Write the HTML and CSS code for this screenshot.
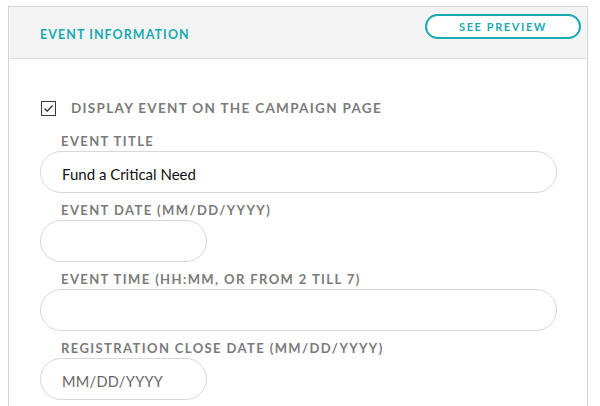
FILE: index.html
```html
<!DOCTYPE html>
<html>
<head>
<meta charset="utf-8">
<link rel="stylesheet" href="styles.css">
</head>
<body>
<section class="panel">
  <header class="panel-head">
    <h2 class="panel-title">EVENT INFORMATION</h2>
    <button class="btn-preview">SEE PREVIEW</button>
  </header>
  <div class="panel-body">
    <label class="check-row">
      <span class="checkbox">
        <svg width="15" height="15" viewBox="0 0 15 15"><rect x="0.5" y="0.5" width="14" height="14" fill="#fff" stroke="#3a3a3a"/><polyline points="3.5,7.5 6.2,10.2 11.5,4.5" fill="none" stroke="#222" stroke-width="1.2"/></svg>
      </span>
      <span class="check-text">DISPLAY EVENT ON THE CAMPAIGN PAGE</span>
    </label>
    <div class="field">
      <div class="field-label">EVENT TITLE</div>
      <div class="input input-wide"><span class="value">Fund a Critical Need</span></div>
    </div>
    <div class="field">
      <div class="field-label">EVENT DATE (MM/DD/YYYY)</div>
      <div class="input input-short"></div>
    </div>
    <div class="field">
      <div class="field-label">EVENT TIME (HH:MM, OR FROM 2 TILL 7)</div>
      <div class="input input-wide"></div>
    </div>
    <div class="field">
      <div class="field-label">REGISTRATION CLOSE DATE (MM/DD/YYYY)</div>
      <div class="input input-short"><span class="placeholder">MM/DD/YYYY</span></div>
    </div>
  </div>
</section>
</body>
</html>
```
FILE: styles.css
```css
html, body {
  margin: 0;
  padding: 0;
  background: #fff;
  font-family: Lato, "Open Sans", sans-serif;
  overflow: hidden;
}
.panel {
  margin: 6px 0 0 8px;
  width: 580px;
  height: 420px;
  box-sizing: border-box;
  border: 1px solid #d4d4d4;
}
.panel-head {
  height: 52px;
  box-sizing: border-box;
  background: #f4f4f4;
  border-bottom: 1px solid #dedede;
  display: flex;
  justify-content: space-between;
  align-items: flex-start;
  padding: 7px 6px 0 31px;
}
.panel-title {
  margin: 0;
  padding-top: 13px;
  font-size: 12.5px;
  line-height: 16px;
  font-weight: 700;
  letter-spacing: 1.05px;
  color: #1aabb0;
}
.btn-preview {
  width: 156px;
  height: 25px;
  box-sizing: border-box;
  border: 2px solid #1aabb0;
  border-radius: 13px;
  background: #fff;
  color: #1aabb0;
  font-family: inherit;
  font-size: 11px;
  font-weight: 700;
  letter-spacing: 1.6px;
  padding: 0;
  line-height: 21px;
}
.panel-body {
  padding: 41px 0 0 31px;
}
.check-row {
  display: flex;
  align-items: center;
  gap: 15px;
  margin-left: 1px;
  height: 16px;
}
.checkbox {
  display: block;
  width: 15px;
  height: 15px;
}
.checkbox svg { display: block; }
.check-text {
  font-size: 13.5px;
  font-weight: 700;
  letter-spacing: 1.3px;
  color: #7b7b7b;
}
.field {
  margin-top: 9px;
}
.check-row + .field {
  margin-top: 17px;
}
.field-label {
  height: 18px;
  line-height: 17px;
  padding-left: 21px;
  font-size: 13px;
  font-weight: 700;
  letter-spacing: 1.4px;
  color: #7b7b7b;
}
.input {
  height: 42px;
  box-sizing: border-box;
  border: 1px solid #d8d8d8;
  border-radius: 21px;
  display: flex;
  align-items: center;
  padding: 4px 0 0 21px;
  font-size: 15px;
}
.input-wide { width: 517px; }
.input-short { width: 167px; }
.value { color: #111; }
.placeholder { color: #666; letter-spacing: 0.3px; font-size: 14.5px; }
```
